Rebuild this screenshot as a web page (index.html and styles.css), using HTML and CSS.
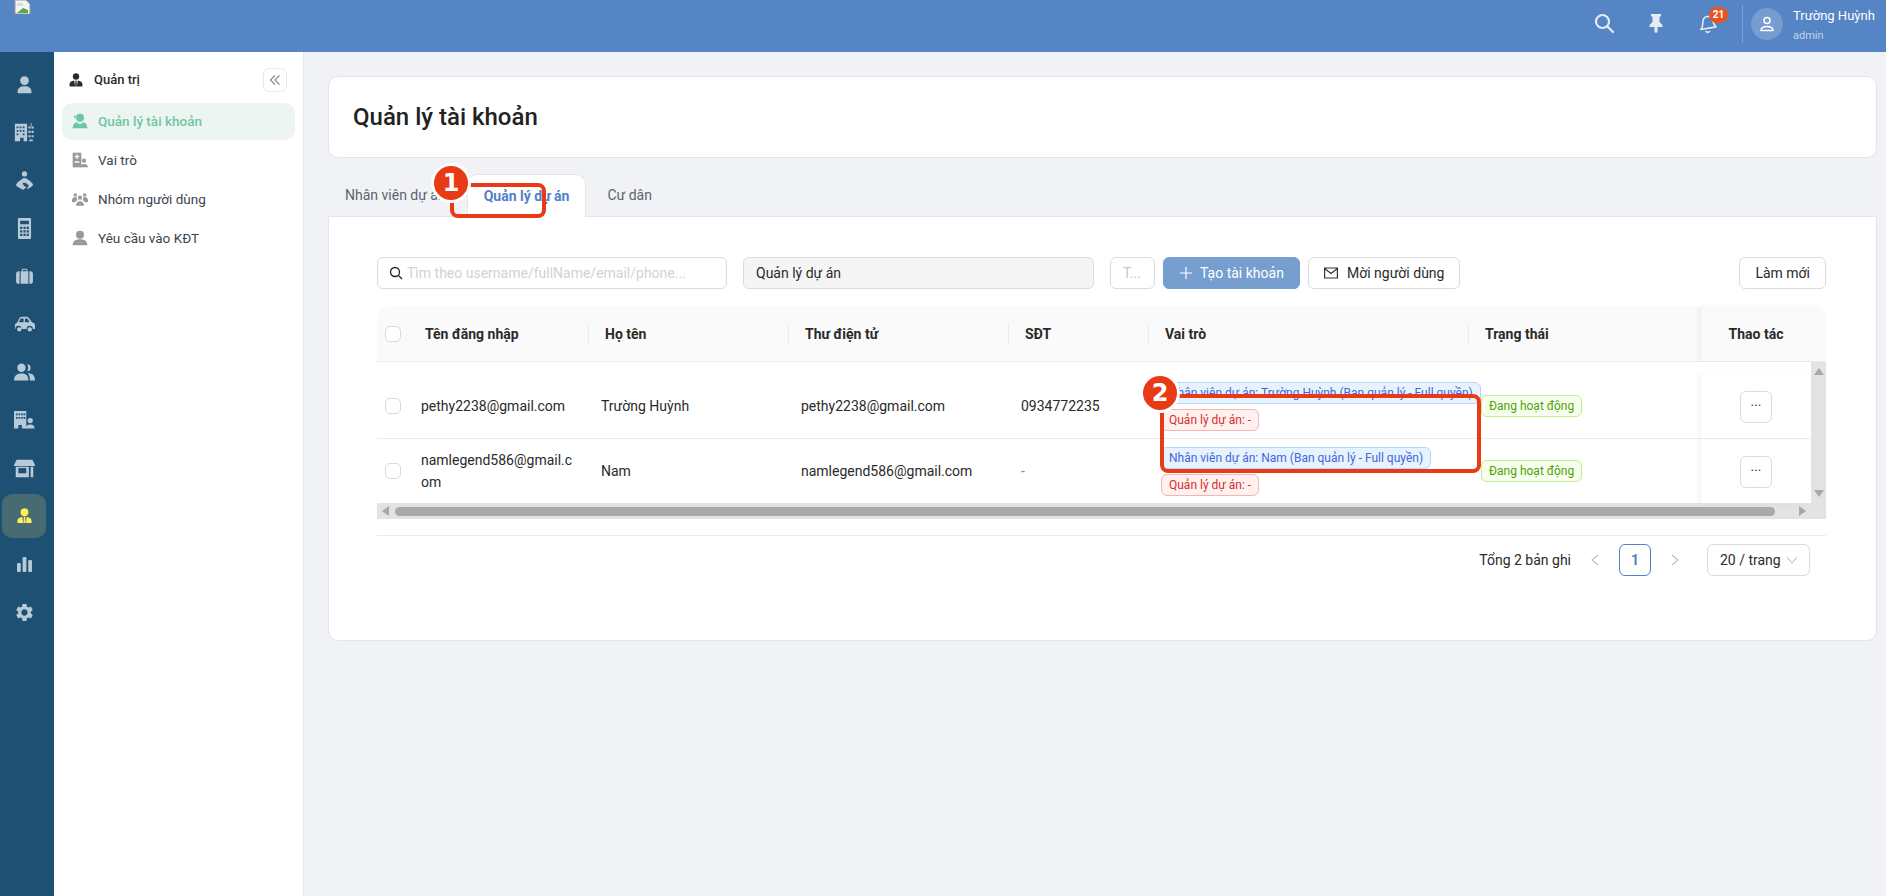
FILE: index.html
```html
<!DOCTYPE html>
<html lang="vi">
<head>
    <meta charset="UTF-8">
    <meta name="viewport" content="width=device-width, initial-scale=1.0">
    <title>Quản lý tài khoản</title>
    <link rel="stylesheet" href="styles.css">
</head>
<body>
<div class="page">

    <header class="topbar">
        <svg class="broken-logo" width="17" height="14" viewBox="0 0 17 14">
            <path d="M1 0h11l4 4v10H1z" fill="#f4f4f4" stroke="#9a9a9a"/>
            <path d="M3 13l6-5 5 2v3z" fill="#5fa53c"/>
            <path d="M3 3h6v3H3z" fill="#cfe0f5"/>
        </svg>
        <div class="topbar-right">
            <svg class="top-icon" width="22" height="22" viewBox="0 0 22 22" fill="none" stroke="currentColor" stroke-width="2.2"><circle cx="9.5" cy="9.5" r="6.5"/><path d="M14.5 14.5l5.5 5.5" stroke-linecap="round"/></svg>
            <svg class="top-icon" width="18" height="20" viewBox="0 0 18 20" fill="currentColor"><path d="M4 1h10v2l-1.5 1v5l3 3v2h-5v5l-1.5 1-1.5-1v-5h-5v-2l3-3V4L4 3z"/></svg>
            <div class="bell">
                <svg width="22" height="22" viewBox="0 0 22 22" fill="none" stroke="currentColor" stroke-width="1.6" stroke-linejoin="round"><path d="M3 16.5c2-1.5 2.4-3.5 2.8-6C6.3 6.800 8.500 4.500 11 4.500s4.500 1.800 5 5c.4 2.800.8 5 2.500 6.500z" transform="rotate(-8 11 11)"/><path d="M9 19.500c1 1 2.500 1 3.500 0" stroke-linecap="round"/></svg>
                <span class="badge">21</span>
            </div>
            <div class="top-divider"></div>
            <div class="avatar">
                <svg width="16" height="16" viewBox="0 0 16 16" fill="none" stroke="#fff" stroke-width="1.5"><circle cx="8" cy="4.500" r="3"/><path d="M2 14.500c0-3 2.500-4 6-4s6 1 6 4z" stroke-linejoin="round"/></svg>
            </div>
            <div class="user-info">
                <div class="user-name">Trường Huỳnh</div>
                <div class="user-role">admin</div>
            </div>
        </div>
    </header>

    <nav class="rail">
        <a class="rail-item"><svg width="24" height="24" viewBox="0 0 24 24" fill="currentColor"><circle cx="12" cy="7.500" r="5"/><path d="M4 21c0-5 3-7 8-7s8 2 8 7c0 .6-.4 1-1 1H5c-.6 0-1-.4-1-1z"/></svg></a>
        <a class="rail-item"><svg width="24" height="24" viewBox="0 0 24 24" fill="currentColor"><path d="M1 2h14v20h-4v-4H7v4H1z"/><path d="M3 5h2v2H3zM6.500 5h2v2h-2zM10 5h2v2h-2zM3 9h2v2H3zM6.500 9h2v2h-2zM10 9h2v2h-2zM3 13h2v2H3zM10 13h2v2h-2z" fill="#1e5074"/><path d="M19 1h1v4h-1zM16.500 5h2.500v2.500h-2.500zM20 5h2.500v2.500H20zM16.500 10h2.500v2.500h-2.500zM20 10h2.500v2.500H20zM16.500 15h2.500v2.500h-2.500zM20 15h2.500v2.500H20zM17.500 20h4v2h-4z"/></svg></a>
        <a class="rail-item"><svg width="24" height="24" viewBox="0 0 24 24" fill="currentColor"><circle cx="12" cy="4.500" r="3"/><path d="M12 9c-2 0-3 1-4 2.500-1.500.5-4.500 3-5.500 5-.4 1 .5 2 1.500 2.500 2 1 5 3.500 7 3.500l3-3-3-1.500 3-2.500 3 2-2.500 4.500c2-.5 4-2 6-3.500 1-.7 1.500-1.500 1-2.500-1-2-4-4.500-5.500-5C15 10 14 9 12 9z"/><path d="M10 15c.6-.8 1.500-.5 2 0 .5-.5 1.400-.8 2 0 .5.900-1 2-2 3-1-1-2.500-2.100-2-3z" fill="#1e5074"/></svg></a>
        <a class="rail-item"><svg width="24" height="24" viewBox="0 0 24 24" fill="currentColor"><path d="M6 0h12c1 0 1.500.5 1.500 1.500v21c0 1-.5 1.500-1.500 1.500H6c-1 0-1.500-.5-1.500-1.500v-21C4.500.5 5 0 6 0z"/><path d="M7 3h10v4H7zM7 10h2.500v2.500H7zM10.800 10h2.500v2.500h-2.500zM14.500 10H17v2.500h-2.500zM7 14h2.500v2.500H7zM10.800 14h2.500v2.500h-2.500zM14.500 14H17v2.500h-2.500zM7 18h2.500v2.500H7zM10.800 18h2.500v2.500h-2.500zM14.500 18H17v2.500h-2.500z" fill="#1e5074"/></svg></a>
        <a class="rail-item"><svg width="24" height="24" viewBox="-3 -2 30 28" fill="currentColor"><path d="M8 4V2.500C8 1.500 8.500 1 9.500 1h5c1 0 1.500.5 1.500 1.500V4h-1.500V2.500h-5V4z"/><path d="M3.500 4.500h1.500v18H3.500C1.500 22.500 0 21 0 19V8c0-2 1.500-3.500 3.500-3.500zM6.500 4.500h11v18h-11zM19 4.500h1.500C22.500 4.500 24 6 24 8v11c0 2-1.500 3.500-3.500 3.500H19z"/></svg></a>
        <a class="rail-item"><svg width="24" height="24" viewBox="0 0 24 24" fill="currentColor"><path d="M1 17v-4c0-1.500 1-2.500 2.500-3L6 5c.5-1 1.500-2 3-2h5c1.500 0 2.500.5 3.500 2l3 4.500c2 .5 3.500 1.500 3.500 3.500v4h-2.500a3.500 3.500 0 0 0-7 0h-6a3.500 3.500 0 0 0-7 0z"/><path d="M7.500 5h3.500v4.500H5.500zM12.500 5h2c.5 0 1 .3 1.300.8l2 3.700h-5.300z" fill="#1e5074"/><circle cx="6" cy="17.500" r="2.500"/><circle cx="18" cy="17.500" r="2.500"/></svg></a>
        <a class="rail-item"><svg width="24" height="24" viewBox="0 0 24 24" fill="currentColor"><circle cx="8.500" cy="6.500" r="4.800"/><path d="M0 21c0-5 3-8 8.500-8s8 3 8 8z"/><path d="M15 2.500a4 4 0 0 1 0 8c.8-1 1.200-2.500 1.200-4s-.4-3-1.200-4zM16 12.500c5 .5 8 3 8 8.500h-5.800c0-3.500-.8-6.500-2.200-8.500z"/></svg></a>
        <a class="rail-item"><svg width="24" height="24" viewBox="0 0 24 24" fill="currentColor"><path d="M0 1h14v20H9v-4H5v4H0z"/><path d="M2.200 4h2v2h-2zM5.200 4h2v2h-2zM8.200 4h2v2h-2zM11 4h2v2h-2zM2.200 8h2v2h-2zM5.200 8h2v2h-2zM8.200 8h2v2h-2zM11 8h2v2h-2z" fill="#1e5074"/><circle cx="18.500" cy="12" r="3"/><path d="M13.500 21c0-3 1.500-4.500 5-4.500s5 1.500 5 4.500z"/></svg></a>
        <a class="rail-item"><svg width="24" height="24" viewBox="0 0 24 24" fill="currentColor"><path d="M3 2h18l3 6v1H0V8z"/><path d="M2 10h15v12H2zM19 10h3v12h-3z"/><path d="M5 11.500h9v6H5z" fill="#1e5074"/></svg></a>
        <a class="rail-item active"><svg width="24" height="24" viewBox="0 0 24 24" fill="currentColor"><circle cx="12" cy="6" r="5.500"/><path d="M2 21v-3c0-2.500 2-4.500 7-5.500l1 8.500zM22 21v-3c0-2.500-2-4.500-7-5.500L14 21z"/><path d="M11 12.500h2l.5 8.500h-3z"/></svg></a>
        <a class="rail-item"><svg width="24" height="24" viewBox="-2 -2 28 28" fill="currentColor"><rect x="2" y="10" width="5" height="12" rx="1.500"/><rect x="9.500" y="2" width="5" height="20" rx="1.500"/><rect x="17" y="6" width="5" height="16" rx="1.500"/></svg></a>
        <a class="rail-item"><svg width="24" height="24" viewBox="0 0 24 24" fill="currentColor"><path d="M19.140 12.940c.04-.3.06-.61.06-.94 0-.32-.02-.64-.07-.94l2.030-1.580c.18-.14.23-.41.12-.61l-1.920-3.320c-.12-.22-.37-.29-.59-.22l-2.390.96c-.5-.38-1.030-.7-1.620-.94L14.400 2.810c-.04-.24-.24-.41-.48-.41h-3.840c-.24 0-.43.17-.47.41L9.250 5.350c-.59.24-1.130.57-1.620.94l-2.390-.96c-.22-.08-.47 0-.59.22L2.740 8.870c-.12.21-.08.47.12.61l2.030 1.580c-.05.3-.09.63-.09.94s.02.64.07.94l-2.030 1.580c-.18.14-.23.41-.12.61l1.920 3.320c.12.22.37.29.59.22l2.390-.96c.5.38 1.030.7 1.620.94l.36 2.540c.05.24.24.41.48.41h3.840c.24 0 .44-.17.47-.41l.36-2.540c.59-.24 1.130-.56 1.620-.94l2.390.96c.22.08.47 0 .59-.22l1.920-3.320c.12-.22.07-.47-.12-.61zM12 15.600c-1.980 0-3.600-1.620-3.600-3.600s1.620-3.600 3.600-3.600 3.600 1.620 3.600 3.600-1.620 3.600-3.600 3.600z"/></svg></a>
    </nav>

    <aside class="submenu">
        <div class="submenu-head">
            <svg width="14" height="14" viewBox="0 0 24 24" fill="#2b2b2b"><circle cx="12" cy="6" r="5.500"/><path d="M1 23v-4c0-3 3-5 8-6l1.500 10zM23 23v-4c0-3-3-5-8-6l-1.500 10zM11 13h2l.5 10h-3z"/></svg>
            <span class="submenu-title">Quản trị</span>
            <button class="collapse-btn">
                <svg width="12" height="12" viewBox="0 0 12 12" fill="none" stroke="currentColor" stroke-width="1.300"><path d="M6 1.500L1.500 6 6 10.500M10.500 1.500L6 6l4.500 4.500"/></svg>
            </button>
        </div>
        <a class="submenu-item active">
            <svg width="16" height="16" viewBox="0 0 24 24" fill="currentColor"><circle cx="12" cy="7" r="6"/><path d="M1 23c0-5 2-8 6-9l5 3 5-3c4 1 6 4 6 9z"/><path d="M3 3l4 3-4 2z"/></svg>
            Quản lý tài khoản
        </a>
        <a class="submenu-item">
            <svg width="16" height="16" viewBox="0 0 24 24" fill="currentColor"><path d="M1 1h13v22H1z"/><path d="M4 6h7v2H4zM6.500 3.500h2v7h-2zM4 14h7v2H4z" fill="#fff"/><circle cx="18" cy="13" r="3.200"/><path d="M12 23c0-3 2-5 6-5s6 2 6 5z"/></svg>
            Vai trò
        </a>
        <a class="submenu-item">
            <svg width="18" height="16" viewBox="0 0 24 20" fill="currentColor"><circle cx="5" cy="4" r="2.700"/><circle cx="12" cy="8" r="3.200"/><circle cx="19" cy="4" r="2.700"/><path d="M0 12c0-3 2-5 5-5 1 0 1.500.2 2 .5-.3 1.500.3 3 1.500 4-2 .7-3 2-3.500 3.500H1c-.6 0-1-.4-1-1zM24 12c0-3-2-5-5-5-1 0-1.500.2-2 .5.300 1.500-.3 3-1.500 4 2 .7 3 2 3.500 3.500H23c.6 0 1-.4 1-1zM6 20c0-4 2.500-6.500 6-6.500s6 2.500 6 6.500z"/></svg>
            Nhóm người dùng
        </a>
        <a class="submenu-item">
            <svg width="16" height="16" viewBox="0 0 24 24" fill="currentColor"><circle cx="12" cy="7" r="6"/><path d="M1 23c0-6 4-9 11-9s11 3 11 9z"/></svg>
            Yêu cầu vào KĐT
        </a>
    </aside>

    <main class="content">
        <div class="title-card">
            <h1 class="page-title">Quản lý tài khoản</h1>
        </div>

        <div class="tabs">
            <a class="tab">Nhân viên dự án</a>
            <a class="tab active">Quản lý dự án</a>
            <a class="tab">Cư dân</a>
        </div>

        <section class="panel">
            <div class="toolbar">
                <div class="search-box">
                    <svg width="14" height="14" viewBox="0 0 14 14" fill="none" stroke="#222" stroke-width="1.300"><circle cx="6" cy="6" r="4.500"/><path d="M9.500 9.500L13 13"/></svg>
                    <span class="placeholder">Tìm theo username/fullName/email/phone...</span>
                </div>
                <div class="select-box">Quản lý dự án</div>
                <div class="short-box">T...</div>
                <button class="btn btn-primary">
                    <svg width="14" height="14" viewBox="0 0 14 14" stroke="#fff" stroke-width="1.200"><path d="M7 1v12M1 7h12"/></svg>
                    Tạo tài khoản
                </button>
                <button class="btn">
                    <svg width="14" height="14" viewBox="0 0 14 14" fill="none" stroke="#333" stroke-width="1.200"><path d="M.6 2h12.800v10H.6zM.6 2.500L7 7.500l6.400-5"/></svg>
                    Mời người dùng
                </button>
                <button class="btn btn-refresh">Làm mới</button>
            </div>

            <div class="table">
                <div class="thead">
                    <div class="th-check"><span class="checkbox"></span></div>
                    <div class="th th-first">Tên đăng nhập</div>
                    <div class="th">Họ tên</div>
                    <div class="th">Thư điện tử</div>
                    <div class="th">SĐT</div>
                    <div class="th">Vai trò</div>
                    <div class="th">Trạng thái</div>
                    <div class="th-fixed">Thao tác</div>
                </div>
                <div class="tbody-wrap">
                    <div class="tbody">
                        <div class="row">
                            <div class="cell-check"><span class="checkbox"></span></div>
                            <div class="cell cell-user">pethy2238@gmail.com</div>
                            <div class="cell">Trường Huỳnh</div>
                            <div class="cell">pethy2238@gmail.com</div>
                            <div class="cell">0934772235</div>
                            <div class="cell-roles">
                                <span class="tag tag-blue">Nhân viên dự án: Trường Huỳnh (Ban quản lý - Full quyền)</span>
                                <span class="tag tag-red">Quản lý dự án: -</span>
                            </div>
                            <div class="cell-status"><span class="tag tag-green">Đang hoạt động</span></div>
                            <div class="cell-fixed"><button class="more-btn">···</button></div>
                        </div>
                        <div class="row row-last">
                            <div class="cell-check"><span class="checkbox"></span></div>
                            <div class="cell cell-user">namlegend586@gmail.com</div>
                            <div class="cell">Nam</div>
                            <div class="cell">namlegend586@gmail.com</div>
                            <div class="cell cell-muted">-</div>
                            <div class="cell-roles">
                                <span class="tag tag-blue">Nhân viên dự án: Nam (Ban quản lý - Full quyền)</span>
                                <span class="tag tag-red">Quản lý dự án: -</span>
                            </div>
                            <div class="cell-status"><span class="tag tag-green">Đang hoạt động</span></div>
                            <div class="cell-fixed"><button class="more-btn">···</button></div>
                        </div>
                    </div>
                    <div class="vscroll">
                        <svg width="10" height="7" viewBox="0 0 10 7" fill="#a8a8a8"><path d="M5 0l5 7H0z"/></svg>
                        <svg width="10" height="7" viewBox="0 0 10 7" fill="#a8a8a8"><path d="M5 7L0 0h10z"/></svg>
                    </div>
                </div>
                <div class="hscroll">
                    <svg width="7" height="10" viewBox="0 0 7 10" fill="#a8a8a8"><path d="M0 5l7-5v10z"/></svg>
                    <div class="hscroll-thumb"></div>
                    <svg width="7" height="10" viewBox="0 0 7 10" fill="#a8a8a8"><path d="M7 5L0 0v10z"/></svg>
                </div>
            </div>

            <div class="pagination">
                <span class="total">Tổng 2 bản ghi</span>
                <svg class="page-arrow" width="10" height="12" viewBox="0 0 10 12" fill="none" stroke="#bdbdbd" stroke-width="1.200"><path d="M8 1L2 6l6 5"/></svg>
                <span class="page-num">1</span>
                <svg class="page-arrow" width="10" height="12" viewBox="0 0 10 12" fill="none" stroke="#bdbdbd" stroke-width="1.200"><path d="M2 1l6 5-6 5"/></svg>
                <div class="page-size">
                    20 / trang
                    <svg width="12" height="8" viewBox="0 0 12 8" fill="none" stroke="#c4c4c4" stroke-width="1.100"><path d="M1 1l5 6 5-6"/></svg>
                </div>
            </div>
        </section>
    </main>

    <!-- khung danh dau tren anh chup -->
    <div class="mark-box mark-box-1"></div>
    <div class="mark-box mark-box-2"></div>
    <div class="mark-dot mark-dot-1">1</div>
    <div class="mark-dot mark-dot-2">2</div>
</div>
</body>
</html>
```

FILE: styles.css
```css
* {
    box-sizing: border-box;
}
body {
    margin: 0;
    font-family: Roboto, "Liberation Sans", sans-serif;
    font-size: 14px;
    color: #2a2a2a;
    background-color: #f0f2f5;
}
button {
    font-family: inherit;
}
.page {
    position: relative;
    display: grid;
    grid-template-columns: 54px 250px 1fr;
    grid-template-rows: 52px 1fr;
    width: 1886px;
    height: 896px;
    overflow: hidden;
}

/* topbar */
.topbar {
    grid-column: 1 / 4;
    display: flex;
    align-items: flex-start;
    justify-content: space-between;
    padding-left: 14px;
    background-color: #5585c5;
}
.topbar-right {
    display: flex;
    align-items: center;
    height: 52px;
    color: #e4ecf6;
}
.top-icon {
    margin-right: 32px;
    margin-top: -6px;
}
.bell {
    position: relative;
    display: flex;
    margin-right: 23px;
    margin-top: -6px;
}
.badge {
    position: absolute;
    top: -5px;
    left: 12px;
    width: 19px;
    height: 16px;
    border-radius: 8px;
    background-color: #e8541c;
    color: #fff;
    font-size: 10px;
    font-weight: 700;
    line-height: 16px;
    text-align: center;
}
.top-divider {
    width: 1px;
    height: 38px;
    margin-top: -4px;
    background-color: rgba(255, 255, 255, 0.25);
}
.avatar {
    display: flex;
    align-items: center;
    justify-content: center;
    width: 32px;
    height: 32px;
    margin: -4px 10px 0 8px;
    border-radius: 50%;
    background-color: rgba(255, 255, 255, 0.2);
}
.user-info {
    width: 93px;
    margin-top: -2px;
}
.user-name {
    color: #fff;
    font-size: 13px;
    line-height: 16px;
}
.user-role {
    margin-top: 5px;
    color: #c3d3ea;
    font-size: 11px;
    line-height: 14px;
}

/* rail */
.rail {
    display: flex;
    flex-direction: column;
    padding: 10px 0 0 2px;
    background-color: #1e5074;
    color: #b8c9d8;
}
.rail-item {
    display: flex;
    align-items: center;
    justify-content: center;
    width: 44px;
    height: 44px;
    margin-bottom: 4px;
    border-radius: 10px;
}
.rail-item svg {
    width: 21px;
    height: 21px;
}
.rail-item.active {
    background-color: #476b73;
    color: #ffee58;
}
.rail-item.active svg {
    width: 17px;
    height: 17px;
}

/* submenu */
.submenu {
    padding: 16px 8px 0;
    border-right: 1px solid #e6e8eb;
    background-color: #fff;
}
.submenu-head {
    display: flex;
    align-items: center;
    height: 24px;
    margin-bottom: 11px;
    padding-left: 7px;
}
.submenu-title {
    margin-left: 11px;
    margin-bottom: 2px;
    font-size: 13px;
    font-weight: 500;
}
.collapse-btn {
    display: flex;
    align-items: center;
    justify-content: center;
    width: 24px;
    height: 24px;
    margin-left: auto;
    margin-right: 8px;
    padding: 0;
    border: 1px solid #eaeaea;
    border-radius: 6px;
    background-color: #fff;
    color: #8c939c;
}
.submenu-item {
    display: flex;
    align-items: center;
    gap: 10px;
    width: 233px;
    height: 37px;
    margin-bottom: 2px;
    padding: 0 0 2px 10px;
    border-radius: 10px;
    color: #3d4350;
    font-size: 13.5px;
}
.submenu-item svg {
    flex: none;
    width: 16px;
    color: #9a9a9a;
}
.submenu-item.active {
    background-color: #ecf5f1;
    color: #6fc6a3;
    font-weight: 500;
}
.submenu-item.active svg {
    color: #6fc6a3;
}

/* content */
.content {
    padding: 24px 9px 0 24px;
}
.title-card {
    display: flex;
    align-items: center;
    height: 82px;
    padding-left: 24px;
    border: 1px solid #e3e5e8;
    border-radius: 10px;
    background-color: #fff;
}
.page-title {
    margin: 0;
    font-size: 24px;
    font-weight: 500;
    color: #222;
}
.tabs {
    display: flex;
    gap: 5px;
    height: 42px;
    margin-top: 16px;
    padding-left: 1px;
}
.tab {
    display: flex;
    align-items: center;
    padding: 0 16px;
    color: #5c6470;
}
.tab.active {
    position: relative;
    height: 43px;
    border: 1px solid #e3e5e8;
    border-bottom: 0;
    border-radius: 10px 10px 0 0;
    background-color: #fff;
    color: #4f80c8;
    font-weight: 700;
}
.panel {
    height: 425px;
    padding: 40px 50px 0 48px;
    border: 1px solid #e3e5e8;
    border-radius: 0 0 10px 10px;
    background-color: #fff;
}

/* toolbar */
.toolbar {
    display: flex;
    align-items: center;
    height: 32px;
}
.search-box,
.select-box,
.short-box,
.btn {
    display: flex;
    align-items: center;
    height: 32px;
    border: 1px solid #dcdcdc;
    border-radius: 6px;
    background-color: #fff;
    font-size: 14px;
    white-space: nowrap;
}
.search-box {
    gap: 4px;
    width: 350px;
    padding-left: 11px;
}
.placeholder {
    color: #d2d2d2;
}
.select-box {
    width: 351px;
    margin-left: 16px;
    padding-left: 12px;
    background-color: #f5f5f5;
}
.short-box {
    width: 45px;
    margin-left: 16px;
    padding-left: 12px;
    color: #c8c8c8;
}
.btn {
    gap: 9px;
    margin-left: 8px;
    padding: 0 15px;
    color: #2a2a2a;
}
.btn-primary {
    gap: 7px;
    width: 137px;
    border-color: #769ecf;
    background-color: #769ecf;
    color: #fff;
}
.btn-refresh {
    margin-left: auto;
}

/* table */
.table {
    margin-top: 18px;
}
.thead {
    display: grid;
    grid-template-columns: 48px 163px 200px 220px 140px 320px 233px 125px;
    align-items: center;
    height: 55px;
    border-bottom: 1px solid #ececec;
    border-radius: 10px 10px 0 0;
    background-color: #fafafa;
    font-weight: 700;
}
.th-check,
.cell-check {
    padding-left: 8px;
}
.checkbox {
    display: block;
    width: 16px;
    height: 16px;
    border: 1px solid #d9d9d9;
    border-radius: 5px;
    background-color: #fff;
}
.th {
    height: 22px;
    padding-left: 16px;
    border-left: 1px solid #ececec;
    line-height: 22px;
}
.th-first {
    padding-left: 0;
    border-left: 0;
}
.th-fixed {
    align-self: stretch;
    display: flex;
    align-items: center;
    justify-content: center;
    padding-right: 15px;
    box-shadow: -3px 0 4px rgba(0, 0, 0, 0.05);
}
.tbody-wrap {
    display: flex;
    height: 141px;
}
.tbody {
    flex: 1;
    padding-top: 12px;
}
.row {
    display: grid;
    grid-template-columns: 44px 180px 200px 220px 140px 320px 220px 110px;
    align-items: center;
    height: 65px;
    border-bottom: 1px solid #ececec;
}
.row-last {
    height: 64px;
    border-bottom: 0;
}
.cell {
    padding-right: 20px;
    line-height: 22px;
}
.cell-user {
    word-break: break-all;
    padding-right: 24px;
}
.cell-muted {
    color: #8a8a8a;
}
.cell-roles {
    display: flex;
    flex-direction: column;
    align-items: flex-start;
    gap: 5px;
}
.tag {
    display: inline-block;
    height: 22px;
    padding: 0 7px;
    border: 1px solid;
    border-radius: 6px;
    font-size: 12px;
    line-height: 20px;
    white-space: nowrap;
}
.tag-blue {
    border-color: #b5d5fb;
    background-color: #e6f3ff;
    color: #4566d8;
}
.tag-red {
    border-color: #f8b4ae;
    background-color: #fff1f0;
    color: #d32f2f;
}
.tag-green {
    border-color: #c1ec8f;
    background-color: #f6ffed;
    color: #52a00c;
}
.cell-status {
    display: flex;
}
.cell-fixed {
    align-self: stretch;
    display: flex;
    align-items: center;
    justify-content: center;
    margin-bottom: -1px;
    box-shadow: -3px 0 4px rgba(0, 0, 0, 0.04);
}
.more-btn {
    width: 32px;
    height: 32px;
    padding: 0 0 2px;
    border: 1px solid #dcdcdc;
    border-radius: 6px;
    background-color: #fff;
    color: #333;
    font-size: 14px;
}
.vscroll {
    display: flex;
    flex-direction: column;
    align-items: center;
    justify-content: space-between;
    width: 15px;
    padding: 6px 0;
    background-color: #e3e3e3;
}
.hscroll {
    display: flex;
    align-items: center;
    gap: 6px;
    height: 16px;
    padding: 0 20px 0 5px;
    background-color: #e3e3e3;
}
.hscroll-thumb {
    flex: 1;
    height: 9px;
    margin-right: 18px;
    border-radius: 5px;
    background-color: #a9a9a9;
}

/* pagination */
.pagination {
    display: flex;
    align-items: center;
    height: 41px;
    margin-top: 16px;
    padding: 8px 16px 0 0;
    border-top: 1px solid #ececec;
}
.total {
    margin-left: auto;
}
.page-arrow {
    margin: 0 19px;
}
.page-num {
    width: 32px;
    height: 32px;
    border: 1px solid #4f80c8;
    border-radius: 6px;
    color: #4f80c8;
    font-weight: 700;
    line-height: 30px;
    text-align: center;
}
.page-size {
    display: flex;
    align-items: center;
    justify-content: space-between;
    width: 103px;
    height: 32px;
    margin-left: 8px;
    padding: 0 11px 0 12px;
    border: 1px solid #dcdcdc;
    border-radius: 6px;
}

/* annotations */
.mark-box {
    position: absolute;
    border: 4px solid #e83a14;
    border-radius: 8px;
}
.mark-box-1 {
    left: 450px;
    top: 183px;
    width: 96px;
    height: 35px;
}
.mark-box-2 {
    left: 1160px;
    top: 394px;
    width: 321px;
    height: 79px;
}
.mark-dot {
    position: absolute;
    width: 40px;
    height: 40px;
    border: 3px solid #fff;
    border-radius: 50%;
    background-color: #e83a14;
    color: #fff;
    font-family: "DejaVu Sans", sans-serif;
    font-size: 24px;
    font-weight: 700;
    line-height: 34px;
    text-align: center;
}
.mark-dot-1 {
    left: 431px;
    top: 163px;
}
.mark-dot-2 {
    left: 1140px;
    top: 373px;
}
```
